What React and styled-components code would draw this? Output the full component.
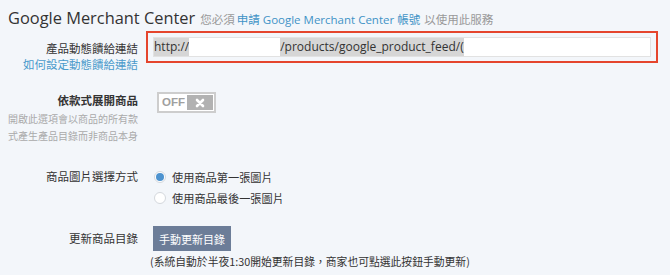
import React from "react";
import styled, { createGlobalStyle } from "styled-components";

const GlobalStyle = createGlobalStyle`
  html, body {
    margin: 0;
    padding: 0;
    background: #f3f6fa;
  }
  body {
    font-family: "Open Sans", "Noto Sans CJK TC", sans-serif;
    color: #333;
  }
`;

const Page = styled.div`
  padding: 7px 8px 0 8px;
  width: 670px;
  box-sizing: border-box;
`;

const Header = styled.div`
  display: flex;
  align-items: baseline;
  gap: 5px;
  line-height: 22px;
`;

const Title = styled.h1`
  margin: 0;
  font-size: 16.4px;
  font-weight: 400;
  color: #333;
`;

const Hint = styled.span`
  font-size: 11.5px;
  color: #999;
  a {
    color: #3f93c6;
    text-decoration: none;
    margin: 0 4px 0 2px;
  }
`;

const Row = styled.div`
  display: grid;
  grid-template-columns: 130px 1fr;
  column-gap: ${(p) => p.$gap || 13}px;
  margin-top: ${(p) => p.$top}px;
  align-items: start;
`;

const LabelCol = styled.div`
  text-align: right;
  padding-top: ${(p) => p.$pad || 0}px;
`;

const Label = styled.div`
  font-size: 11.5px;
  line-height: 16px;
  color: #333;
  font-weight: ${(p) => (p.$bold ? 600 : 400)};
  font-family: "Noto Sans CJK TC", sans-serif;
`;

const HelpLink = styled.a`
  display: block;
  font-size: 11.5px;
  line-height: 16px;
  color: #4a9acb;
  text-decoration: none;
  font-family: "Noto Sans CJK TC", sans-serif;
`;

const Desc = styled.div`
  font-size: 10px;
  line-height: 17px;
  color: #aaa;
  margin-top: 2px;
  font-family: "Noto Sans CJK TC", sans-serif;
`;

const Highlight = styled.div`
  border: 2px solid #e5452d;
  padding: 4px 5px;
  height: 20px;
  width: 498px;
`;

const FakeInput = styled.div`
  height: 20px;
  box-sizing: border-box;
  background: #fff;
  border: 1px solid #e2e2e2;
  display: flex;
  align-items: center;
  font-size: 12px;
  color: #333;
  white-space: nowrap;
  overflow: hidden;
`;

const Selected = styled.span`
  background: #d6d6d6;
  line-height: 18px;
`;

const Redacted = styled.span`
  display: inline-block;
  width: ${(p) => p.$w}px;
  height: 18px;
  background: #fff;
`;

const Toggle = styled.div`
  display: inline-flex;
  width: 59px;
  height: 21px;
  box-sizing: border-box;
  border: 2px solid #cdcdcd;
  padding: 1px;
  background: #fff;
  margin-left: 6px;
`;

const ToggleText = styled.span`
  flex: 1;
  font-size: 11.5px;
  font-weight: 700;
  color: #a0a0a0;
  line-height: 15px;
  padding-left: 2px;
  font-family: "Liberation Sans", sans-serif;
`;

const ToggleKnob = styled.span`
  width: 26px;
  background: #b2b2b2;
  display: flex;
  align-items: center;
  justify-content: center;
`;

const Radios = styled.div`
  display: flex;
  flex-direction: column;
`;

const RadioRow = styled.label`
  display: flex;
  align-items: center;
  gap: 6px;
  height: 21px;
  font-size: 11.2px;
  color: #333;
  font-family: "Noto Sans CJK TC", sans-serif;
  padding-left: 3px;
`;

const Dot = styled.span`
  width: 12px;
  height: 12px;
  box-sizing: border-box;
  border-radius: 50%;
  border: 1px solid #d4d8dd;
  background: #fff;
  display: flex;
  align-items: center;
  justify-content: center;
  &::after {
    content: "";
    width: 8px;
    height: 8px;
    border-radius: 50%;
    background: ${(p) => (p.$on ? "#4d93cf" : "transparent")};
  }
`;

const Button = styled.button`
  border: none;
  background: #6c7d98;
  color: #fff;
  font-size: 11px;
  font-family: "Noto Sans CJK TC", sans-serif;
  height: 25px;
  width: 78px;
  padding: 0;
  margin-left: 2px;
  cursor: pointer;
`;

const Note = styled.div`
  font-size: 10.8px;
  line-height: 16px;
  color: #333;
  margin-top: 2px;
  margin-left: -1px;
  font-family: "Noto Sans CJK TC", sans-serif;
`;

const XIcon = () => (
  <svg width="10" height="10" viewBox="0 0 10 10">
    <path d="M2 2 L8 8 M8 2 L2 8" stroke="#fff" strokeWidth="2.6" strokeLinecap="round" />
  </svg>
);

export default function App() {
  return (
    <Page>
      <GlobalStyle />
      <Header>
        <Title>Google Merchant Center</Title>
        <Hint>
          您必須<a href="#">申請 Google Merchant Center 帳號</a>以使用此服務
        </Hint>
      </Header>

      <Row $top={0} $gap={8}>
        <LabelCol $pad={9}>
          <Label>產品動態饋給連結</Label>
          <HelpLink href="#">如何設定動態饋給連結</HelpLink>
        </LabelCol>
        <Highlight>
          <FakeInput>
            <Selected>http://</Selected>
            <Redacted $w={91} />
            <Selected>/products/google_product_feed/(</Selected>
          </FakeInput>
        </Highlight>
      </Row>

      <Row $top={17}>
        <LabelCol $pad={3}>
          <Label $bold>依款式展開商品</Label>
          <Desc>
            開啟此選項會以商品的所有款
            <br />
            式產生產品目錄而非商品本身
          </Desc>
        </LabelCol>
        <div>
          <Toggle>
            <ToggleText>OFF</ToggleText>
            <ToggleKnob>
              <XIcon />
            </ToggleKnob>
          </Toggle>
        </div>
      </Row>

      <Row $top={22}>
        <LabelCol $pad={2}>
          <Label>商品圖片選擇方式</Label>
        </LabelCol>
        <Radios>
          <RadioRow>
            <Dot $on />
            使用商品第一張圖片
          </RadioRow>
          <RadioRow>
            <Dot />
            使用商品最後一張圖片
          </RadioRow>
        </Radios>
      </Row>

      <Row $top={18}>
        <LabelCol $pad={4}>
          <Label>更新商品目錄</Label>
        </LabelCol>
        <div>
          <Button>手動更新目錄</Button>
          <Note>(系統自動於半夜1:30開始更新目錄，商家也可點選此按鈕手動更新)</Note>
        </div>
      </Row>
    </Page>
  );
}
